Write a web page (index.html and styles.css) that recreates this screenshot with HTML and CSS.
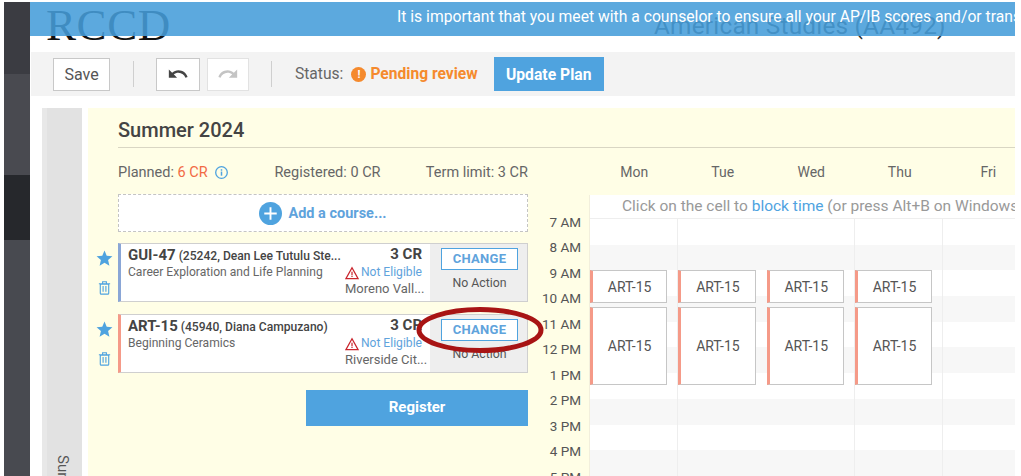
FILE: index.html
```html
<!DOCTYPE html>
<html lang="en">
<head>
<meta charset="utf-8">
<title>Summer 2024 plan</title>
<link rel="stylesheet" href="styles.css">
</head>
<body>
<div class="page">
  <aside class="rail">
    <div class="rail-a"></div>
    <div class="rail-b"></div>
    <div class="rail-c"></div>
    <div class="rail-d"></div>
  </aside>
  <main class="main">
    <header class="head">
      <div class="logo">RCCD</div>
      <div class="program">American Studies (AA492)</div>
      <div class="banner">It is important that you meet with a counselor to ensure all your AP/IB scores and/or transcripts are applied</div>
    </header>
    <div class="toolbar">
      <button class="tool save">Save</button>
      <span class="sep sep-one"></span>
      <button class="tool undo"><svg viewBox="0 0 24 24" width="22" height="22"><path d="M12.5 8c-2.65 0-5.05.99-6.9 2.6L2 7v9h9l-3.62-3.62c1.39-1.16 3.16-1.88 5.12-1.88 3.54 0 6.55 2.31 7.6 5.5l2.37-.78C21.08 11.03 17.15 8 12.5 8z"/></svg></button>
      <button class="tool redo"><svg viewBox="0 0 24 24" width="22" height="22"><path d="M18.4 10.6C16.55 8.99 14.15 8 11.5 8c-4.65 0-8.58 3.03-9.96 7.22l2.37.78c1.05-3.19 4.05-5.5 7.59-5.5 1.95 0 3.73.72 5.12 1.88L13 16h9V7z"/></svg></button>
      <span class="sep sep-two"></span>
      <span class="status">Status:</span>
      <span class="pend-dot">!</span>
      <span class="pending">Pending review</span>
      <button class="update">Update Plan</button>
    </div>
    <div class="content">
      <div class="tab"><span class="tab-label">Summer 2024</span></div>
      <section class="term">
        <h1 class="term-title">Summer 2024</h1>
        <div class="term-body">
          <div class="left">
            <div class="stats">
              <span class="stat-planned">Planned: <em class="cr">6 CR</em>
                <svg class="info" viewBox="0 0 16 16" width="15" height="15"><circle cx="8" cy="8" r="6.2" fill="none" stroke="#4fa3df" stroke-width="1.4"/><rect x="7.2" y="7" width="1.6" height="4.4" fill="#4fa3df"/><rect x="7.2" y="4.5" width="1.6" height="1.6" fill="#4fa3df"/></svg>
              </span>
              <span class="stat-reg">Registered: 0 CR</span>
              <span class="stat-limit">Term limit: 3 CR</span>
            </div>
            <div class="add">
              <span class="add-icon"><svg viewBox="0 0 24 24" width="23" height="23"><circle cx="12" cy="12" r="12" fill="#4fa3df"/><path d="M11 5.5h2V11h5.500v2H13v5.500h-2V13H5.500v-2H11z" fill="#fff"/></svg></span>
              <span class="add-text">Add a course...</span>
            </div>
            <div class="course-row">
              <div class="side-icons">
                <svg viewBox="0 0 24 24" width="19" height="19"><path fill="#4fa3df" d="M12 17.270 18.180 21l-1.640-7.030L22 9.240l-7.190-.61L12 2 9.190 8.630 2 9.240l5.460 4.730L5.820 21z"/></svg>
                <svg viewBox="0 0 16 16" width="15" height="15"><path fill="none" stroke="#4fa3df" stroke-width="1.200" d="M3.500 4.500h9v9.500a1 1 0 0 1-1 1h-7a1 1 0 0 1-1-1zM2 4h12M6 4V1.800h4V4M6.500 6.500v6M9.500 6.500v6"/></svg>
              </div>
              <div class="card card-blue">
                <div class="card-info">
                  <div class="card-title"><b class="code">GUI-47</b> (25242, Dean Lee Tutulu Ste...</div>
                  <div class="card-sub">Career Exploration and Life Planning</div>
                </div>
                <div class="card-meta">
                  <div class="credits">3 CR</div>
                  <div class="elig"><svg viewBox="0 0 16 16" width="14" height="14"><path d="M8 2 15 14.500H1z" fill="none" stroke="#c9252d" stroke-width="1.500"/><rect x="7.300" y="6.500" width="1.400" height="4" fill="#c9252d"/><rect x="7.300" y="11.200" width="1.400" height="1.400" fill="#c9252d"/></svg><span>Not Eligible</span></div>
                  <div class="campus">Moreno Vall...</div>
                </div>
                <div class="card-action">
                  <button class="change">CHANGE</button>
                  <div class="no-action">No Action</div>
                </div>
              </div>
            </div>
            <div class="course-row">
              <div class="side-icons">
                <svg viewBox="0 0 24 24" width="19" height="19"><path fill="#4fa3df" d="M12 17.270 18.180 21l-1.640-7.030L22 9.240l-7.190-.61L12 2 9.190 8.630 2 9.240l5.460 4.730L5.820 21z"/></svg>
                <svg viewBox="0 0 16 16" width="15" height="15"><path fill="none" stroke="#4fa3df" stroke-width="1.200" d="M3.500 4.500h9v9.500a1 1 0 0 1-1 1h-7a1 1 0 0 1-1-1zM2 4h12M6 4V1.800h4V4M6.500 6.500v6M9.500 6.500v6"/></svg>
              </div>
              <div class="card card-red">
                <div class="card-info">
                  <div class="card-title"><b class="code">ART-15</b> (45940, Diana Campuzano)</div>
                  <div class="card-sub">Beginning Ceramics</div>
                </div>
                <div class="card-meta">
                  <div class="credits">3 CR</div>
                  <div class="elig"><svg viewBox="0 0 16 16" width="14" height="14"><path d="M8 2 15 14.500H1z" fill="none" stroke="#c9252d" stroke-width="1.500"/><rect x="7.300" y="6.500" width="1.400" height="4" fill="#c9252d"/><rect x="7.300" y="11.200" width="1.400" height="1.400" fill="#c9252d"/></svg><span>Not Eligible</span></div>
                  <div class="campus">Riverside Cit...</div>
                </div>
                <div class="card-action">
                  <button class="change">CHANGE</button>
                  <div class="no-action">No Action</div>
                </div>
              </div>
            </div>
            <button class="register">Register</button>
          </div>
          <div class="right">
            <div class="days">
              <span>Mon</span><span>Tue</span><span>Wed</span><span>Thu</span><span>Fri</span>
            </div>
            <div class="cal-row">
              <div class="times">
                <span>7 AM</span><span>8 AM</span><span>9 AM</span><span>10 AM</span><span>11 AM</span><span>12 PM</span><span>1 PM</span><span>2 PM</span><span>3 PM</span><span>4 PM</span><span>5 PM</span>
              </div>
              <div class="cal">
                <div class="hint">Click on the cell to <span class="link">block time</span> (or press Alt+B on Windows or Option+B on Mac)</div>
                <div class="grid">
                  <div class="stripe"></div><div class="stripe alt"></div><div class="stripe"></div><div class="stripe alt"></div><div class="stripe"></div><div class="stripe alt"></div><div class="stripe"></div><div class="stripe alt"></div><div class="stripe"></div><div class="stripe alt"></div>
                  <div class="vlines"><i></i><i class="none"></i><i></i><i></i></div>
                  <div class="events">
                    <div class="ev-col"><div class="ev short">ART-15</div><div class="ev tall">ART-15</div></div>
                    <div class="ev-col"><div class="ev short">ART-15</div><div class="ev tall">ART-15</div></div>
                    <div class="ev-col"><div class="ev short">ART-15</div><div class="ev tall">ART-15</div></div>
                    <div class="ev-col"><div class="ev short">ART-15</div><div class="ev tall">ART-15</div></div>
                  </div>
                </div>
              </div>
            </div>
          </div>
        </div>
      </section>
    </div>
  </main>
  <svg class="circle" viewBox="0 0 134 52" width="134" height="52"><ellipse cx="67" cy="26" rx="61" ry="20.500" fill="none" stroke="#a81414" stroke-width="5"/></svg>
</div>
</body>
</html>
```
FILE: styles.css
```css
* { box-sizing: border-box; }
html, body { margin: 0; padding: 0; background: #fff; }
body { font-family: Roboto, "Liberation Sans", sans-serif; color: #555; }
.page { position: relative; display: flex; width: 1021px; height: 476px; padding: 2px 6px 0 4px; overflow: hidden; background: #fff; }

.rail { flex: 0 0 26px; display: flex; flex-direction: column; }
.rail-a { height: 72px; background: #3b3c42; }
.rail-b { height: 101px; background: #494a50; }
.rail-c { height: 65px; background: #26282c; }
.rail-d { flex: 1; background: #484a50; }

.main { flex: 1; min-width: 0; display: flex; flex-direction: column; }

.head { position: relative; height: 50px; overflow: hidden; flex: none; }
.logo { position: absolute; left: 16px; top: 0; font-family: "Liberation Serif", serif; font-size: 45px; line-height: 46px; letter-spacing: 0.6px; color: #111; }
.program { position: absolute; left: 624px; top: 10px; font-size: 24.400px; line-height: 28px; letter-spacing: 0.2px; color: #333; white-space: nowrap; }
.banner { position: absolute; left: 0; right: 0; top: 0; height: 34px; padding-left: 367px; line-height: 30px; font-size: 15.700px; color: #fff; white-space: nowrap; overflow: hidden; background: rgba(70, 157, 218, 0.88); }

.toolbar { flex: none; position: relative; display: flex; align-items: center; height: 44px; margin-left: 1px; padding-left: 22px; background: #f3f3f3; }
.tool { display: flex; align-items: center; justify-content: center; height: 33px; padding: 0; background: #fff; border: 1px solid #c8c8c8; font: 16px Roboto, sans-serif; color: #555; }
.save { width: 57px; }
.undo { width: 44px; margin-right: 7px; }
.undo svg { fill: #444; }
.redo { width: 42px; border-color: #e2e2e2; }
.redo svg { fill: #c4c4c4; }
.sep { width: 1px; height: 26px; background: #cfcfcf; }
.sep-one { margin: 0 22px 0 23px; }
.sep-two { margin: 0 23px 0 22px; }
.status { font-size: 15.600px; color: #666; margin-right: 8px; }
.pend-dot { width: 15px; height: 15px; margin-right: 4px; border-radius: 50%; background: #f58a2d; color: #fff; font-size: 11px; font-weight: 700; line-height: 15px; text-align: center; }
.pending { font-size: 15.600px; font-weight: 700; color: #f58a2d; margin-right: 16px; }
.update { width: 110px; height: 34px; padding: 0; border: 0; background: #4fa3df; color: #fff; font: 700 15.700px Roboto, sans-serif; }

.content { flex: 1; min-height: 0; display: flex; margin-top: 12px; padding-left: 12px; }
.tab { flex: 0 0 40px; border-left: 5px solid #e8e8e8; background: #e2e2e2; padding: 347px 0 0 6px; overflow: hidden; }
.tab-label { display: block; writing-mode: vertical-rl; font-size: 15px; line-height: 20px; color: #555; white-space: nowrap; }

.term { flex: 1; min-width: 0; margin-left: 6px; padding-left: 30px; background: #fffee6; overflow: hidden; }
.term-title { margin: 0; height: 40px; padding-top: 10px; border-bottom: 1px solid #d9d6c3; font-size: 20px; font-weight: 500; line-height: 24px; color: #444; }
.term-body { display: flex; }

.left { flex: 0 0 410px; min-width: 0; }
.stats { display: flex; height: 46px; padding-top: 16px; font-size: 14.500px; line-height: 18px; color: #666; }
.cr { font-style: normal; color: #f26a45; }
.info { vertical-align: -3px; margin-left: 3px; }
.stat-planned { width: 157px; }
.stat-reg { width: 152px; }
.stat-limit { white-space: nowrap; }

.add { display: flex; align-items: center; justify-content: center; height: 38px; background: #fff; border: 1px dashed #c4c4c4; }
.add-icon { display: flex; margin-right: 6px; }
.add-text { font-size: 14.500px; font-weight: 700; color: #5fa3dc; }

.course-row { position: relative; margin-top: 11px; }
.course-row + .course-row { margin-top: 12px; }
.side-icons { position: absolute; left: -24px; top: 6px; width: 20px; display: flex; flex-direction: column; align-items: center; gap: 12px; }
.card { display: flex; height: 59px; background: #fff; border: 1px solid #cfcfcf; border-left-width: 3px; }
.card-blue { border-left-color: #8aa6d6; }
.card-red { border-left-color: #f59a88; }
.card-info { width: 217px; padding: 3px 0 0 7px; flex: none; }
.card-title { font-size: 12.100px; font-weight: 500; line-height: 17px; color: #444; white-space: nowrap; }
.code { font-size: 15px; font-weight: 700; }
.card-sub { font-size: 12.100px; line-height: 15px; color: #666; white-space: nowrap; }
.card-meta { flex: 1; min-width: 0; padding: 2px 8px 0 0; text-align: right; position: relative; }
.credits { font-size: 15px; font-weight: 700; line-height: 17px; color: #444; }
.elig { display: flex; align-items: center; justify-content: flex-end; gap: 2px; font-size: 12.100px; line-height: 16px; color: #5fa3dc; }
.elig svg { margin-top: 3px; }
.campus { font-size: 13px; line-height: 18px; color: #666; text-align: left; padding-left: 7px; white-space: nowrap; }
.card-action { flex: 0 0 97px; padding: 4px 9px 0 11px; background: #eee; text-align: center; }
.change { display: block; width: 77px; height: 22px; padding: 0; border: 1px solid #4fa3df; background: #fff; color: #5fa3dc; font: 700 13px/20px Roboto, sans-serif; letter-spacing: 0.3px; }
.no-action { margin-top: 5px; font-size: 12.300px; line-height: 16px; color: #555; }

.register { display: block; width: 222px; height: 36px; margin: 17px 0 0 188px; padding: 0 0 2px; border: 0; background: #4fa3df; color: #fff; font: 700 15px Roboto, sans-serif; }

.right { flex: 1; min-width: 0; }
.days { display: grid; grid-template-columns: repeat(5, 88.500px); height: 47px; padding: 15px 0 0 62px; font-size: 14px; line-height: 18px; color: #666; text-align: center; width: 600px; }
.cal-row { display: flex; }
.times { flex: 0 0 53px; display: flex; flex-direction: column; padding-top: 14.500px; text-align: right; font-size: 13.500px; color: #555; }
.times span { height: 25.500px; line-height: 25px; white-space: nowrap; }
.cal { flex: 1; min-width: 0; margin-left: 8px; background: #fff; border-left: 1px solid #f2efdc; overflow: hidden; }
.hint { height: 24px; padding-left: 32px; font-size: 15.500px; line-height: 22px; color: #999; white-space: nowrap; border-bottom: 1px solid #eee; }
.link { color: #4fa3df; }
.grid { position: relative; }
.stripe { height: 25.700px; background: #fff; }
.stripe.alt { background: #f7f7f7; }
.vlines { position: absolute; inset: 0; display: grid; grid-template-columns: repeat(4, 88.300px); }
.vlines i { border-right: 1px solid #eee; }
.vlines i.none { border-right: 0; }
.events { position: absolute; left: 0; top: 51px; display: grid; grid-template-columns: repeat(4, 88.300px); }
.ev-col { display: flex; flex-direction: column; gap: 4px; padding-right: 11px; }
.ev { display: flex; align-items: center; justify-content: center; background: #fff; border: 1px solid #c6c6c6; border-left: 3px solid #f59a88; font-size: 14px; color: #555; }
.short { height: 33px; }
.tall { height: 78px; }

.circle { position: absolute; left: 413px; top: 304px; }
```
